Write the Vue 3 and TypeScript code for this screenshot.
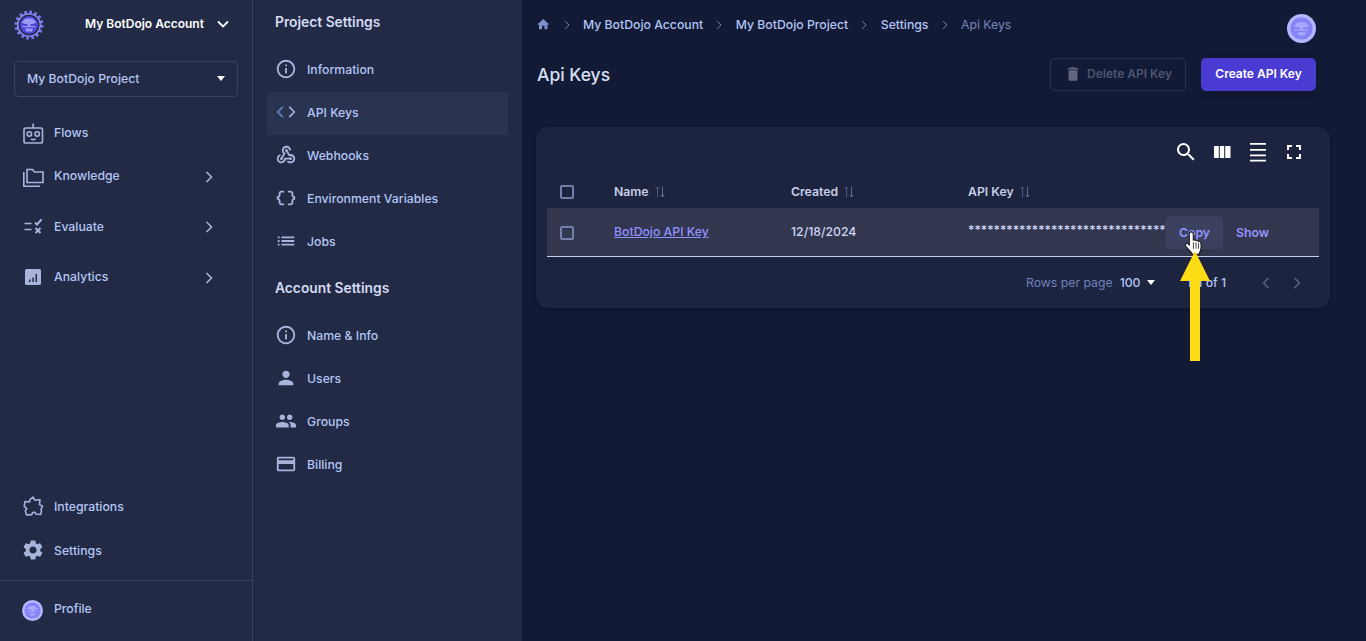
<template>
  <div class="app">
    <aside class="sidebar">
      <div class="account">
        <svg class="logo" viewBox="0 0 30 30" width="30" height="30">
          <circle cx="15" cy="15" r="13" fill="none" stroke="#7f78f0" stroke-width="3" stroke-dasharray="2.600 2.500" />
          <circle cx="15" cy="15" r="11.300" fill="none" stroke="#8d86f5" stroke-width="1.600" />
          <circle cx="15" cy="15" r="9" fill="#5144d8" />
          <path d="M7.500 12.500 11.500 8.500h7l4 4-3.500 1.500h-8zM8.500 16h13v1.200h-13zM13.500 13.500h3v3h-3zM11 18.500h8l-1 3h-6z" fill="#9d99fb" />
        </svg>
        <span class="account-name">My BotDojo Account</span>
        <svg class="account-caret" viewBox="0 0 12 8" width="12" height="8"><path d="M1 1.500 6 6.500 11 1.500" fill="none" stroke="#fff" stroke-width="1.800" /></svg>
      </div>
      <div class="project-select">
        <span>My BotDojo Project</span>
        <i class="tri"></i>
      </div>
      <nav class="main-nav">
        <div v-for="item in mainNav" :key="item.label" class="nav-item" :class="{ spaced: item.arrow }">
          <svg class="nav-icon" viewBox="0 0 24 24" width="24" height="24" v-html="item.icon"></svg>
          <span>{{ item.label }}</span>
          <svg v-if="item.arrow" class="nav-arrow" viewBox="0 0 8 12" width="8" height="12"><path d="M1.500 1 6.500 6 1.500 11" fill="none" stroke="#a9b4dc" stroke-width="1.600" /></svg>
        </div>
      </nav>
      <div class="side-bottom">
        <div class="nav-item bottom-item">
          <svg class="nav-icon" viewBox="0 0 24 24" width="24" height="24" v-html="icons.puzzle"></svg>
          <span>Integrations</span>
        </div>
        <div class="nav-item bottom-item">
          <svg class="nav-icon" viewBox="0 0 24 24" width="24" height="24" v-html="icons.gear"></svg>
          <span>Settings</span>
        </div>
        <div class="nav-item profile">
          <svg class="nav-icon" viewBox="0 0 30 30" width="21" height="21" v-html="avatar"></svg>
          <span>Profile</span>
        </div>
      </div>
    </aside>

    <section class="settings">
      <h3 class="settings-title first">Project Settings</h3>
      <div v-for="item in projectNav" :key="item.label" class="set-item tight" :class="{ active: item.active }">
        <svg viewBox="0 0 24 24" width="22" height="22" v-html="item.icon"></svg>
        <span>{{ item.label }}</span>
      </div>
      <h3 class="settings-title">Account Settings</h3>
      <div v-for="item in accountNav" :key="item.label" class="set-item">
        <svg viewBox="0 0 24 24" width="22" height="22" v-html="item.icon"></svg>
        <span>{{ item.label }}</span>
      </div>
    </section>

    <main class="main">
      <div class="crumb-row">
        <div class="crumbs">
          <svg viewBox="0 0 24 24" width="14.500" height="15"><path d="M10 20v-6h4v6h5v-8h3L12 3 2 12h3v8z" fill="#7d90cc" /></svg>
          <template v-for="c in crumbs" :key="c">
            <svg class="sep" viewBox="0 0 6 10" width="6" height="10"><path d="M1 1 5 5 1 9" fill="none" stroke="#6b7aa8" stroke-width="1" /></svg>
            <span :class="{ current: c === 'Api Keys' }">{{ c }}</span>
          </template>
        </div>
        <svg class="top-avatar" viewBox="0 0 30 30" width="29" height="29" v-html="avatar"></svg>
      </div>

      <div class="title-row">
        <h1>Api Keys</h1>
        <div class="actions">
          <button class="btn-delete">
            <svg viewBox="0 0 24 24" width="18" height="18"><path d="M6 19c0 1.100.900 2 2 2h8c1.100 0 2-.900 2-2V7H6zM19 4h-3.500l-1-1h-5l-1 1H5v2h14z" fill="#62677f" /></svg>
            Delete API Key
          </button>
          <button class="btn-create">Create API Key</button>
        </div>
      </div>

      <div class="card">
        <div class="toolbar">
          <svg viewBox="0 0 24 24" width="24" height="24"><path d="M15.500 14h-.790l-.280-.270A6.470 6.470 0 0 0 16 9.500 6.500 6.500 0 1 0 9.500 16c1.610 0 3.090-.590 4.230-1.570l.270.280v.790l5 4.990L20.490 19zm-6 0C7.010 14 5 11.990 5 9.500S7.010 5 9.500 5 14 7.010 14 9.500 11.990 14 9.500 14" fill="#fff" /></svg>
          <svg viewBox="0 0 24 24" width="24" height="24"><path d="M4 6h4.800v12H4zM9.800 6h4.400v12H9.800zM15.200 6H20.500v12h-5.300z" fill="#fff" /></svg>
          <svg viewBox="0 0 24 24" width="24" height="24"><path d="M4 3h16v1.700H4zM4 9h16v1.700H4zM4 14.600h16v1.700H4zM4 19.800h16v1.700H4z" fill="#fff" /></svg>
          <svg viewBox="0 0 24 24" width="24" height="24"><path d="M7 14H5v5h5v-2H7zm-2-4h2V7h3V5H5zm12 7h-3v2h5v-5h-2zM14 5v2h3v3h2V5z" fill="#fff" /></svg>
        </div>
        <div class="table">
          <div class="thead tr">
            <div class="c-check"><i class="check"></i></div>
            <div class="c-name">Name<svg class="sort" viewBox="0 0 10 12" width="10" height="12" v-html="sortIcon"></svg></div>
            <div class="c-date">Created<svg class="sort" viewBox="0 0 10 12" width="10" height="12" v-html="sortIcon"></svg></div>
            <div class="c-key">API Key<svg class="sort" viewBox="0 0 10 12" width="10" height="12" v-html="sortIcon"></svg></div>
          </div>
          <div class="tbody tr">
            <div class="c-check"><i class="check"></i></div>
            <div class="c-name"><a class="link">BotDojo API Key</a></div>
            <div class="c-date">12/18/2024</div>
            <div class="c-key key-cell">
              <span class="stars">{{ maskedKey }}</span>
              <span class="row-btn hovered">Copy</span>
              <span class="row-btn">Show</span>
            </div>
          </div>
        </div>
        <div class="pager">
          <span class="rows-label">Rows per page</span>
          <span class="rows-val">100</span>
          <i class="tri small"></i>
          <span class="page-of">1-1 of 1</span>
          <svg viewBox="0 0 8 12" width="8" height="12"><path d="M6.500 1 1.500 6 6.500 11" fill="none" stroke="#5b6484" stroke-width="1.500" /></svg>
          <svg class="next" viewBox="0 0 8 12" width="8" height="12"><path d="M1.500 1 6.500 6 1.500 11" fill="none" stroke="#5b6484" stroke-width="1.500" /></svg>
        </div>
      </div>
    </main>

    <svg class="cursor" viewBox="0 0 17 22" width="20" height="26">
      <path d="M6.200.700c1 0 1.700.700 1.700 1.700v5.300c.300-.100 2 0 2.300.300.500 0 1.500.200 1.700.500.500 0 1.500.300 1.700.700.600.300.900.900.900 1.500v3.300c0 1.500-.500 3-1.300 4.300l-.300 1.500H7l-.500-1.300C5 17 3 14.500 1.500 13 .700 12 1.200 10.500 2.500 10.500c.700 0 1.200.500 2 1.300V2.400C4.500 1.400 5.200.700 6.200.700z" fill="#fff" stroke="#111" stroke-width=".9" />
      <path d="M8 9.500V15M10.200 9.500V15M12.300 10V15" stroke="#222" stroke-width=".700" />
    </svg>
    <svg class="callout" viewBox="0 0 30 110" width="30" height="110"><path d="M15 0 30 30H20V110H10V30H0z" fill="#fcdc14" /></svg>
  </div>
</template>

<script setup lang="ts">
const s = 'fill="none" stroke="#a9b4dc" stroke-width="1.600"'
const f = 'fill="#a9b4dc"'

const info = `<path d="M11 7h2v2h-2zm0 4h2v6h-2zm1-9C6.480 2 2 6.480 2 12s4.480 10 10 10 10-4.480 10-10S17.520 2 12 2zm0 18c-4.410 0-8-3.590-8-8s3.590-8 8-8 8 3.590 8 8-3.590 8-8 8z" ${f}/>`

const icons = {
  robot: `<rect x="3" y="7" width="18.500" height="15" rx="1.800" ${s}/><path d="M12.200 2.500v4.500" ${s}/><circle cx="8.300" cy="13" r="2.200" ${s}/><circle cx="16.200" cy="13" r="2.200" ${s}/><path d="M10 18q2.200 1.300 4.500 0" ${s}/>`,
  folder: `<path d="M2.800 8v14.200H19" ${s}/><path d="M6 5.500h5.500l2 2.500H22v10.500H6z" ${s}/>`,
  evaluate: `<path d="M3.500 9.500h7M3.500 15.500h7" ${s}/><path d="M14 8.500l2 2 4.500-5M14.500 14l5 5M19.500 14l-5 5" fill="none" stroke="#a9b4dc" stroke-width="1.900"/>`,
  analytics: `<rect x="4" y="4" width="16" height="16" rx="1.500" ${f}/><path d="M8 14.500h1.500V17H8zM11.300 12.500h1.500V17h-1.500zM14.500 9h1.500v8h-1.500z" fill="#222a45"/>`,
  puzzle: `<path d="M9 5.500 12 3l1.800 3.200 5.200-.500-.500 4.800 3 1.700-1.500 3 .500 1.500-.800 3.800-4.700-.500-1.200-1.800-2.300.300-.800 2.200-5.200.200-1.200-4.300L5.800 14.500 3.200 12.300 4 7.500l4.300.500z" fill="none" stroke="#a9b4dc" stroke-width="1.600" stroke-linejoin="round"/>`,
  gear: `<path d="M19.140 12.940c.040-.300.060-.610.060-.940 0-.320-.020-.640-.070-.940l2.030-1.580c.180-.140.230-.410.120-.610l-1.920-3.320c-.120-.220-.370-.290-.590-.220l-2.390.960c-.500-.380-1.030-.700-1.620-.940l-.360-2.540c-.040-.240-.240-.410-.480-.410h-3.840c-.240 0-.430.170-.470.410l-.360 2.540c-.590.240-1.130.570-1.620.940l-2.390-.960c-.220-.080-.470 0-.590.220L2.740 8.870c-.120.210-.080.470.120.610l2.030 1.580c-.050.300-.090.630-.090.940s.020.640.070.940l-2.030 1.580c-.180.140-.230.410-.120.610l1.920 3.320c.120.220.370.290.590.220l2.390-.960c.500.380 1.030.700 1.620.940l.360 2.540c.050.240.240.410.480.410h3.840c.240 0 .440-.170.470-.410l.360-2.540c.590-.240 1.130-.560 1.620-.940l2.390.960c.220.080.470 0 .590-.220l1.920-3.320c.120-.220.070-.470-.120-.610l-2.010-1.580zM12 15.600c-1.980 0-3.600-1.620-3.600-3.600s1.620-3.600 3.600-3.600 3.600 1.620 3.600 3.600-1.620 3.600-3.600 3.600z" ${f}/>`,
  info,
  code: `<path d="M8.500 6.500 3 12l5.500 5.500" fill="none" stroke="#6e82c4" stroke-width="1.800"/><path d="M15.500 6.500 21 12l-5.500 5.500" fill="none" stroke="#a9b4dc" stroke-width="1.800"/>`,
  webhook: `<path d="M10 15l5.880 0c.270-.310.670-.500 1.120-.500.830 0 1.500.670 1.500 1.500 0 .830-.670 1.500-1.500 1.500-.440 0-.840-.190-1.120-.500l-3.980 0c-.460 2.280-2.480 4-4.900 4-2.760 0-5-2.240-5-5 0-2.420 1.720-4.440 4-4.900l0 2.070c-1.160.410-2 1.530-2 2.830 0 1.650 1.350 3 3 3S10 16.650 10 15zM12.500 4c1.650 0 3 1.350 3 3h2c0-2.760-2.240-5-5-5l0 0c-2.760 0-5 2.240-5 5 0 1.430.600 2.710 1.550 3.620l-2.350 3.900C6.020 14.660 5.500 15.270 5.500 16c0 .830.670 1.500 1.500 1.500s1.500-.670 1.500-1.500c0-.160-.020-.310-.070-.450l3.380-5.630C10.490 9.610 9.500 8.420 9.500 7 9.500 5.350 10.850 4 12.500 4zM17 13c-.640 0-1.230.200-1.720.540l-3.050-5.070C11.530 8.350 11 7.740 11 7c0-.830.670-1.500 1.500-1.500S14 6.170 14 7c0 .150-.020.290-.060.430l2.190 3.650C16.410 11.030 16.700 11 17 11l0 0c2.760 0 5 2.240 5 5 0 2.760-2.240 5-5 5-1.850 0-3.470-1.010-4.330-2.500l2.670 0C15.820 18.820 16.390 19 17 19c1.650 0 3-1.350 3-3S18.650 13 17 13z" ${f}/>`,
  braces: `<path d="M4 7v2c0 .550-.450 1-1 1H2v4h1c.550 0 1 .450 1 1v2c0 1.650 1.350 3 3 3h3v-2H7c-.550 0-1-.450-1-1v-2c0-1.300-.840-2.420-2-2.830v-.340C5.160 11.420 6 10.300 6 9V7c0-.550.450-1 1-1h3V4H7C5.350 4 4 5.350 4 7zM21 10c-.550 0-1-.450-1-1V7c0-1.650-1.350-3-3-3h-3v2h3c.550 0 1 .450 1 1v2c0 1.300.840 2.420 2 2.830v.340c-1.160.410-2 1.520-2 2.830v2c0 .550-.450 1-1 1h-3v2h3c1.650 0 3-1.350 3-3v-2c0-.550.450-1 1-1h1v-4H21z" ${f}/>`,
  list: `<path d="M3 13h2v-2H3v2zm0 4h2v-2H3v2zm0-8h2V7H3v2zm4 4h14v-2H7v2zm0 4h14v-2H7v2zM7 7v2h14V7H7z" ${f}/>`,
  user: `<path d="M12 12c2.210 0 4-1.790 4-4s-1.790-4-4-4-4 1.790-4 4 1.790 4 4 4zm0 2c-2.670 0-8 1.340-8 4v2h16v-2c0-2.660-5.330-4-8-4z" ${f}/>`,
  group: `<path d="M16 11c1.660 0 2.990-1.340 2.990-3S17.660 5 16 5c-1.660 0-3 1.340-3 3s1.340 3 3 3zm-8 0c1.660 0 2.990-1.340 2.990-3S9.660 5 8 5C6.340 5 5 6.340 5 8s1.340 3 3 3zm0 2c-2.330 0-7 1.170-7 3.500V19h14v-2.500c0-2.330-4.670-3.500-7-3.500zm8 0c-.290 0-.620.020-.970.050 1.160.840 1.970 1.970 1.970 3.450V19h6v-2.500c0-2.330-4.670-3.500-7-3.500z" ${f}/>`,
  card: `<path d="M20 4H4c-1.110 0-1.990.890-1.990 2L2 18c0 1.110.890 2 2 2h16c1.110 0 2-.890 2-2V6c0-1.110-.890-2-2-2zm0 14H4v-6h16v6zm0-10H4V6h16v2z" ${f}/>`,
}

const avatar = `<circle cx="15" cy="15" r="15" fill="#b4b6ff"/><circle cx="15" cy="15" r="11.500" fill="#8583f6"/><path d="M7 12.500 11.500 8.500h7l4.500 4-3 1.300h-10zM8 16h14v1.300H8zM13.500 13.500h3v3h-3zM10.500 18.800h9l-1.500 3.500h-6z" fill="#a9a9ff"/>`

const sortIcon = `<path d="M2.500 11.500V1M.8 3.200 2.500 1 4.200 3.200" fill="none" stroke="#4a5378" stroke-width="1"/><path d="M7.500.5V11M5.800 8.800 7.500 11 9.200 8.800" fill="none" stroke="#626c92" stroke-width="1"/>`

const mainNav = [
  { label: 'Flows', icon: icons.robot, arrow: false },
  { label: 'Knowledge', icon: icons.folder, arrow: true },
  { label: 'Evaluate', icon: icons.evaluate, arrow: true },
  { label: 'Analytics', icon: icons.analytics, arrow: true },
]

const projectNav = [
  { label: 'Information', icon: icons.info, active: false },
  { label: 'API Keys', icon: icons.code, active: true },
  { label: 'Webhooks', icon: icons.webhook, active: false },
  { label: 'Environment Variables', icon: icons.braces, active: false },
  { label: 'Jobs', icon: icons.list, active: false },
]

const accountNav = [
  { label: 'Name & Info', icon: icons.info },
  { label: 'Users', icon: icons.user },
  { label: 'Groups', icon: icons.group },
  { label: 'Billing', icon: icons.card },
]

const crumbs = ['My BotDojo Account', 'My BotDojo Project', 'Settings', 'Api Keys']
const maskedKey = '*'.repeat(31)
</script>

<style>
html,
body {
  margin: 0;
  background: #121a36;
}
</style>

<style scoped>
.app {
  position: relative;
  display: flex;
  width: 1366px;
  height: 641px;
  overflow: hidden;
  background: #121a36;
  font-family: Inter, "Liberation Sans", sans-serif;
  font-size: 12.250px;
  font-weight: 500;
  color: #b4c6f5;
}

.sidebar {
  display: flex;
  flex-direction: column;
  box-sizing: border-box;
  width: 253px;
  flex: none;
  background: #222a45;
  border-right: 1px solid #3a4263;
}

.account {
  display: flex;
  align-items: center;
  height: 46px;
  padding-left: 14px;
  color: #fff;
}

.logo {
  margin-top: 3px;
}

.account-name {
  margin-left: 41px;
  font-weight: 600;
  font-size: 12px;
}

.account-caret {
  margin-left: 13px;
  margin-top: 2px;
}

.project-select {
  display: flex;
  align-items: center;
  justify-content: space-between;
  box-sizing: border-box;
  width: 224px;
  height: 36px;
  margin: 15px 0 0 14px;
  padding: 0 12px 2px;
  border: 1px solid #3a4263;
  border-radius: 4px;
}

.tri {
  width: 0;
  height: 0;
  border-left: 4.500px solid transparent;
  border-right: 4.500px solid transparent;
  border-top: 5px solid #fff;
}

.tri.small {
  margin-left: 6px;
}

.main-nav {
  margin-top: 14px;
}

.nav-item {
  display: flex;
  align-items: center;
  height: 43px;
  padding-left: 21px;
  position: relative;
}

.nav-item.spaced + .nav-item.spaced {
  margin-top: 7.500px;
}

.nav-icon {
  flex: none;
  margin-right: 9px;
}

.nav-arrow {
  position: absolute;
  left: 205px;
  top: 50%;
  margin-top: -5px;
}

.side-bottom {
  margin-top: auto;
}

.bottom-item {
  height: 44px;
}

.profile {
  box-sizing: border-box;
  height: 61px;
  margin-top: 8px;
  padding: 0 0 5px 22px;
  border-top: 1px solid #3a4263;
}

.profile .nav-icon {
  margin: 4px 11px 0 0;
}

.settings {
  box-sizing: border-box;
  width: 269px;
  flex: none;
  padding: 0 14px;
  background: #222a45;
}

.settings-title {
  box-sizing: border-box;
  height: 50px;
  margin: 0;
  padding: 15px 8px 0;
  font-size: 13.800px;
  font-weight: 600;
  line-height: 18px;
  color: #d5dcf3;
}

.settings-title.first {
  height: 49px;
  padding-top: 13px;
}

.set-item {
  display: flex;
  align-items: center;
  gap: 10px;
  box-sizing: border-box;
  height: 43px;
  padding: 0 0 1px 8px;
}

.set-item.tight {
  padding-bottom: 3px;
}

.set-item.active {
  background: #2a3350;
}

.main {
  flex: 1;
  min-width: 0;
  box-sizing: border-box;
  padding: 0 36px 0 14px;
}

.crumb-row {
  display: flex;
  align-items: center;
  justify-content: space-between;
  height: 58px;
  margin-right: 14px;
}

.crumbs {
  display: flex;
  align-items: center;
  margin-top: -9px;
}

.sep {
  margin: 0 13.250px;
}

.current {
  color: #7886bb;
  font-weight: 400;
}

.top-avatar {
  margin-top: -1px;
}

.title-row {
  display: flex;
  align-items: center;
  justify-content: space-between;
  height: 33px;
  margin-right: 14px;
}

h1 {
  margin: 0 0 0 1px;
  font-size: 17.500px;
  font-weight: 500;
  color: #d9e0f5;
}

.actions {
  display: flex;
  gap: 15px;
}

button {
  display: flex;
  align-items: center;
  justify-content: center;
  height: 33px;
  box-sizing: border-box;
  padding: 0 0 2px;
  border-radius: 5px;
  font: inherit;
  font-weight: 600;
  font-size: 12px;
}

.btn-delete {
  width: 136px;
  gap: 5px;
  background: none;
  border: 1px solid #2c3350;
  color: #4f5570;
}

.btn-create {
  width: 115px;
  background: #4a3bd2;
  border: none;
  color: #fff;
  box-shadow: 0 2px 6px rgba(0, 0, 0, 0.25);
}

.card {
  margin-top: 36px;
  width: 794px;
  height: 181px;
  box-sizing: border-box;
  padding: 0 11px;
  background: #1d2440;
  border-radius: 12px;
  box-shadow: 0 1px 3px rgba(0, 0, 0, 0.3);
}

.toolbar {
  display: flex;
  justify-content: flex-end;
  gap: 12px;
  height: 49px;
  align-items: center;
  padding-right: 13px;
}

.tr {
  display: flex;
  align-items: center;
}

.thead {
  height: 32px;
  padding-bottom: 1px;
  box-sizing: border-box;
  font-weight: 600;
  color: #c8cfe6;
}

.tbody {
  box-sizing: border-box;
  height: 49px;
  padding-bottom: 1px;
  background: #32364f;
  border-bottom: 1px solid #c6d0f5;
  color: #ccd6f6;
}

.c-check {
  width: 67px;
  padding-left: 13px;
  box-sizing: border-box;
}

.tbody .check {
  margin-top: 3px;
}

.c-name {
  width: 177px;
}

.c-date {
  width: 177px;
}

.c-key {
  flex: 1;
}

.key-cell {
  display: flex;
  align-items: center;
}

.check {
  display: block;
  width: 10px;
  height: 10px;
  border: 2px solid #7480ab;
  border-radius: 2px;
}

.sort {
  vertical-align: -2px;
  margin-left: 6px;
}

.link {
  color: #9092ff;
  text-decoration: underline;
}

.stars {
  flex: none;
  width: 198px;
  margin-top: -5px;
  white-space: nowrap;
}

.row-btn {
  display: flex;
  align-items: center;
  justify-content: center;
  width: 57px;
  height: 33px;
  margin-top: 2px;
  color: #9395ff;
  font-weight: 600;
  border-radius: 4px;
}

.row-btn.hovered {
  background: #3c4160;
}

.row-btn + .row-btn {
  margin-left: 1px;
}

.pager {
  display: flex;
  align-items: center;
  height: 51px;
  padding-left: 479px;
}

.rows-label {
  color: #7080bb;
  font-weight: 400;
}

.rows-val {
  margin-left: 7px;
}

.page-of {
  margin-left: 32px;
  margin-right: 36px;
}

.next {
  margin-left: 23px;
}

.callout {
  position: absolute;
  left: 1180px;
  top: 251px;
}

.cursor {
  position: absolute;
  left: 1184px;
  top: 231px;
}
</style>
